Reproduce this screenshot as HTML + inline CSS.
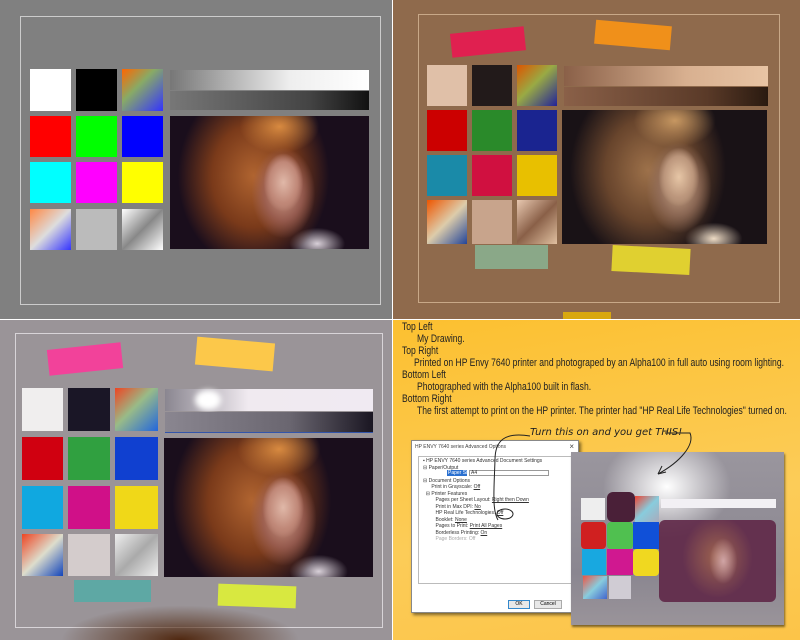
<!DOCTYPE html>
<html><head><meta charset="utf-8"><style>
*{margin:0;padding:0;box-sizing:border-box}
body{width:800px;height:640px;position:relative;overflow:hidden;background:#fff;font-family:"Liberation Sans",sans-serif}
div{position:absolute}
.ph{background:
 radial-gradient(ellipse 10% 22% at 57% 50%,#e0b8a8 0%,#c08878 70%,rgba(0,0,0,0) 100%),
 radial-gradient(ellipse 16% 34% at 57% 58%,#c89888 0%,rgba(160,100,90,.8) 60%,rgba(0,0,0,0) 100%),
 radial-gradient(ellipse 20% 20% at 55% 8%,#d88a40 0%,rgba(180,100,40,0) 100%),
 radial-gradient(ellipse 38% 70% at 42% 45%,#b06430 0%,#7a3a1a 55%,rgba(40,15,20,0) 100%),
 radial-gradient(ellipse 14% 12% at 74% 96%,#d8d0d8 0%,rgba(0,0,0,0) 100%),
 #1a0e1c}
.t{white-space:nowrap;font-size:11px;color:#222;transform:scaleX(.78);transform-origin:left top;line-height:12px}
</style></head><body>
<!-- TL -->
<div style="left:0;top:0;width:392px;height:319px;background:#808080"></div>
<div style="left:20px;top:16px;width:361px;height:289px;border:1px solid #ccc"></div>
<div style="left:30px;top:69px;width:41px;height:42px;background:#fff"></div>
<div style="left:76px;top:69px;width:41px;height:42px;background:#000"></div>
<div style="left:122px;top:69px;width:41px;height:42px;background:linear-gradient(135deg,#f60,#8a6 40%,#33f 100%),#444"></div>
<div style="left:30px;top:116px;width:41px;height:41px;background:#f00"></div>
<div style="left:76px;top:116px;width:41px;height:41px;background:#0f0"></div>
<div style="left:122px;top:116px;width:41px;height:41px;background:#00f"></div>
<div style="left:30px;top:162px;width:41px;height:41px;background:#0ff"></div>
<div style="left:76px;top:162px;width:41px;height:41px;background:#f0f"></div>
<div style="left:122px;top:162px;width:41px;height:41px;background:#ff0"></div>
<div style="left:30px;top:209px;width:41px;height:41px;background:linear-gradient(135deg,#f84 0%,#ddd 50%,#33f 100%)"></div>
<div style="left:76px;top:209px;width:41px;height:41px;background:#bbb"></div>
<div style="left:122px;top:209px;width:41px;height:41px;background:linear-gradient(135deg,#fff,#888 50%,#fff)"></div>
<div style="left:170px;top:70px;width:199px;height:20px;background:linear-gradient(90deg,#777,#eee 60%,#fff)"></div>
<div style="left:170px;top:91px;width:199px;height:19px;background:linear-gradient(90deg,#777,#444 70%,#111)"></div>
<div class="ph" style="left:170px;top:116px;width:199px;height:133px"></div>
<!-- TR -->
<div style="left:393px;top:0;width:407px;height:319px;background:#8f6a4c"></div>
<div style="left:418px;top:14px;width:362px;height:289px;border:1px solid #c8a888"></div>
<div style="left:427px;top:65px;width:40px;height:41px;background:#e0c0a8"></div>
<div style="left:472px;top:65px;width:40px;height:41px;background:#221a1a"></div>
<div style="left:517px;top:65px;width:40px;height:41px;background:linear-gradient(135deg,#d50,#9a4 45%,#229 100%)"></div>
<div style="left:427px;top:110px;width:40px;height:41px;background:#c00"></div>
<div style="left:472px;top:110px;width:40px;height:41px;background:#2a8a2a"></div>
<div style="left:517px;top:110px;width:40px;height:41px;background:#1a2490"></div>
<div style="left:427px;top:155px;width:40px;height:41px;background:#1a8aa8"></div>
<div style="left:472px;top:155px;width:40px;height:41px;background:#d01040"></div>
<div style="left:517px;top:155px;width:40px;height:41px;background:#e8c000"></div>
<div style="left:427px;top:200px;width:40px;height:44px;background:linear-gradient(135deg,#e50,#dca 50%,#249)"></div>
<div style="left:472px;top:200px;width:40px;height:44px;background:#c8a48c"></div>
<div style="left:517px;top:200px;width:40px;height:44px;background:linear-gradient(135deg,#e8c8b0,#8a6048 50%,#e0c0a0)"></div>
<div style="left:564px;top:66px;width:204px;height:20px;background:linear-gradient(90deg,#8a6048,#d8b090 60%,#e8c4a4)"></div>
<div style="left:564px;top:87px;width:204px;height:19px;background:linear-gradient(90deg,#8a6048,#5a3a28 70%,#2a1a10)"></div>
<div class="ph" style="left:562px;top:110px;width:205px;height:134px;filter:sepia(.5) brightness(.95)"></div>
<div style="left:451px;top:30px;width:74px;height:24px;background:#e02050;transform:rotate(-6deg)"></div>
<div style="left:595px;top:23px;width:76px;height:24px;background:#f0901a;transform:rotate(5deg)"></div>
<div style="left:475px;top:245px;width:73px;height:24px;background:#8aa888"></div>
<div style="left:612px;top:247px;width:78px;height:26px;background:#e0d030;transform:rotate(3deg)"></div>
<div style="left:563px;top:312px;width:48px;height:7px;background:#d8a810"></div>
<!-- BL -->
<div style="left:0;top:320px;width:392px;height:320px;background:#9a9498"></div>
<div style="left:15px;top:333px;width:368px;height:295px;border:1px solid #d8d4d8"></div>
<div style="left:22px;top:388px;width:41px;height:43px;background:#f0eeee"></div>
<div style="left:68px;top:388px;width:42px;height:43px;background:#1a1626"></div>
<div style="left:115px;top:388px;width:43px;height:43px;background:linear-gradient(135deg,#e42,#9b8 45%,#26d)"></div>
<div style="left:22px;top:437px;width:41px;height:43px;background:#d00010"></div>
<div style="left:68px;top:437px;width:42px;height:43px;background:#30a040"></div>
<div style="left:115px;top:437px;width:43px;height:43px;background:#1040d0"></div>
<div style="left:22px;top:486px;width:41px;height:43px;background:#10a8e0"></div>
<div style="left:68px;top:486px;width:42px;height:43px;background:#d01088"></div>
<div style="left:115px;top:486px;width:43px;height:43px;background:#f0d818"></div>
<div style="left:22px;top:534px;width:41px;height:42px;background:linear-gradient(135deg,#e42,#ddc 50%,#14b)"></div>
<div style="left:68px;top:534px;width:42px;height:42px;background:#d4cccc"></div>
<div style="left:115px;top:534px;width:43px;height:42px;background:linear-gradient(135deg,#eee,#aaa 50%,#eee)"></div>
<div style="left:165px;top:389px;width:208px;height:22px;background:linear-gradient(90deg,#8a8690,#f0eaf0 40%,#f0eaf2)"></div>
<div style="left:195px;top:390px;width:26px;height:20px;border-radius:50%;background:#fff;filter:blur(3px)"></div>
<div style="left:165px;top:412px;width:208px;height:21px;background:linear-gradient(90deg,#8a8690,#6a6670 60%,#1a1622);border-bottom:1px solid #35a"></div>
<div class="ph" style="left:164px;top:438px;width:209px;height:139px"></div>
<div style="left:48px;top:346px;width:74px;height:26px;background:#f2429a;transform:rotate(-6deg)"></div>
<div style="left:196px;top:340px;width:78px;height:28px;background:#fcc84a;transform:rotate(5deg)"></div>
<div style="left:74px;top:580px;width:77px;height:22px;background:#5ea8a4"></div>
<div style="left:218px;top:585px;width:78px;height:22px;background:#d8e840;transform:rotate(2deg)"></div>
<div style="left:60px;top:605px;width:240px;height:35px;background:radial-gradient(ellipse at 50% 100%,#502810,rgba(80,40,16,0) 70%)"></div>
<!-- BR -->
<div style="left:393px;top:320px;width:407px;height:320px;background:linear-gradient(170deg,#fcc030,#fccc58 60%,#fcc448)"></div>
<div class="t" style="left:402px;top:321px">Top Left</div>
<div class="t" style="left:417px;top:333px">My Drawing.</div>
<div class="t" style="left:402px;top:345px">Top Right</div>
<div class="t" style="left:414px;top:357px">Printed on HP Envy 7640 printer and photograped by an Alpha100 in full auto using room lighting.</div>
<div class="t" style="left:402px;top:369px">Bottom Left</div>
<div class="t" style="left:417px;top:381px">Photographed with the Alpha100 built in flash.</div>
<div class="t" style="left:402px;top:393px">Bottom Right</div>
<div class="t" style="left:417px;top:405px">The first attempt to print on the HP printer. The printer had "HP Real Life Technologies" turned on.</div>
<!-- dialog -->
<div style="left:411px;top:440px;width:168px;height:173px;background:#fff;border:1px solid #888;box-shadow:2px 2px 3px rgba(0,0,0,.5)">
 <div style="left:3px;top:3px;font-size:5px;color:#444;white-space:nowrap">HP ENVY 7640 series Advanced Options</div>
 <div style="right:4px;top:1px;font-size:8px;color:#444">×</div>
 <div style="left:6px;top:15px;width:160px;height:128px;border:1px solid #bbb;font-size:5px;color:#333;line-height:6.5px;white-space:nowrap">
  <div style="left:4px;top:1px">▪ HP ENVY 7640 series Advanced Document Settings<br>⊟ Paper/Output<br><br>⊟ Document Options<br>&nbsp;&nbsp;&nbsp;&nbsp;&nbsp;&nbsp;Print in Grayscale: <u>Off</u><br>&nbsp;&nbsp;⊟ Printer Features<br>&nbsp;&nbsp;&nbsp;&nbsp;&nbsp;&nbsp;&nbsp;&nbsp;&nbsp;Pages per Sheet Layout: <u>Right then Down</u><br>&nbsp;&nbsp;&nbsp;&nbsp;&nbsp;&nbsp;&nbsp;&nbsp;&nbsp;Print in Max DPI: <u>No</u><br>&nbsp;&nbsp;&nbsp;&nbsp;&nbsp;&nbsp;&nbsp;&nbsp;&nbsp;HP Real Life Technologies: <u>Off</u><br>&nbsp;&nbsp;&nbsp;&nbsp;&nbsp;&nbsp;&nbsp;&nbsp;&nbsp;Booklet: <u>None</u><br>&nbsp;&nbsp;&nbsp;&nbsp;&nbsp;&nbsp;&nbsp;&nbsp;&nbsp;Pages to Print: <u>Print All Pages</u><br>&nbsp;&nbsp;&nbsp;&nbsp;&nbsp;&nbsp;&nbsp;&nbsp;&nbsp;Borderless Printing: <u>On</u><br><span style="color:#aaa">&nbsp;&nbsp;&nbsp;&nbsp;&nbsp;&nbsp;&nbsp;&nbsp;&nbsp;Page Borders: Off</span></div>
  <div style="left:28px;top:13px;width:20px;height:6px;background:#2a70d0;color:#fff;font-size:5px;line-height:6px;padding-left:1px">Paper Size:</div>
  <div style="left:50px;top:13px;width:80px;height:6px;border:1px solid #999;font-size:5px;line-height:5px;padding-left:1px">A4</div>
 </div>
 <div style="left:96px;top:159px;width:22px;height:9px;border:1px solid #38c;background:#e8e8e8;font-size:5px;text-align:center;line-height:7px">OK</div>
 <div style="left:122px;top:159px;width:28px;height:9px;border:1px solid #aaa;background:#e8e8e8;font-size:5px;text-align:center;line-height:7px">Cancel</div>
</div>
<!-- printed photo -->
<div style="left:571px;top:452px;width:213px;height:173px;background:radial-gradient(ellipse 30% 30% at 45% 20%,#fff,rgba(255,255,255,0) 100%),linear-gradient(#9a969e,#8a8690 70%,#9a949a);box-shadow:1px 2px 2px rgba(0,0,0,.5)">
 <div style="left:10px;top:46px;width:24px;height:22px;background:#eee"></div>
 <div style="left:36px;top:40px;width:28px;height:30px;background:#4a2038;border-radius:6px"></div>
 <div style="left:64px;top:44px;width:24px;height:26px;background:linear-gradient(135deg,#e43,#8cd 50%,#aab)"></div>
 <div style="left:10px;top:70px;width:25px;height:27px;background:#d02020;border-radius:4px"></div>
 <div style="left:36px;top:70px;width:26px;height:27px;background:#50c050;border-radius:4px"></div>
 <div style="left:62px;top:70px;width:26px;height:27px;background:#1050d8"></div>
 <div style="left:11px;top:97px;width:24px;height:26px;background:#18a8e0"></div>
 <div style="left:36px;top:97px;width:26px;height:26px;background:#d01890"></div>
 <div style="left:62px;top:97px;width:26px;height:27px;background:#f0d820;border-radius:4px"></div>
 <div style="left:12px;top:124px;width:24px;height:23px;background:linear-gradient(135deg,#e54,#8cd 50%,#46c)"></div>
 <div style="left:38px;top:124px;width:22px;height:23px;background:#d0ccd4"></div>
 <div style="left:90px;top:47px;width:115px;height:9px;background:#f2f0f4"></div>
 <div style="left:88px;top:68px;width:117px;height:82px;background:radial-gradient(ellipse 12% 28% at 55% 50%,#d8a8a8,rgba(0,0,0,0)),radial-gradient(ellipse 30% 50% at 50% 45%,#a06048,rgba(0,0,0,0)),#602848;border-radius:6px;opacity:.9"></div>
</div>
<div style="left:530px;top:427px;font-family:'DejaVu Sans',sans-serif;font-style:italic;font-size:10px;color:#222;white-space:nowrap">Turn this on and you get THIS!</div>
<svg style="position:absolute;left:0;top:0" width="800" height="640">
 <path d="M530 436 C505 432 495 440 495 460 C494 490 492 510 498 520" fill="none" stroke="#222" stroke-width="1"/>
 <ellipse cx="505" cy="514" rx="8" ry="5" fill="none" stroke="#222" stroke-width="1"/>
 <path d="M665 433 L690 433 C695 445 680 462 658 474" fill="none" stroke="#222" stroke-width="1"/>
 <path d="M658 474 L662 466 M658 474 L666 472" fill="none" stroke="#222" stroke-width="1"/>
</svg>
</body></html>
